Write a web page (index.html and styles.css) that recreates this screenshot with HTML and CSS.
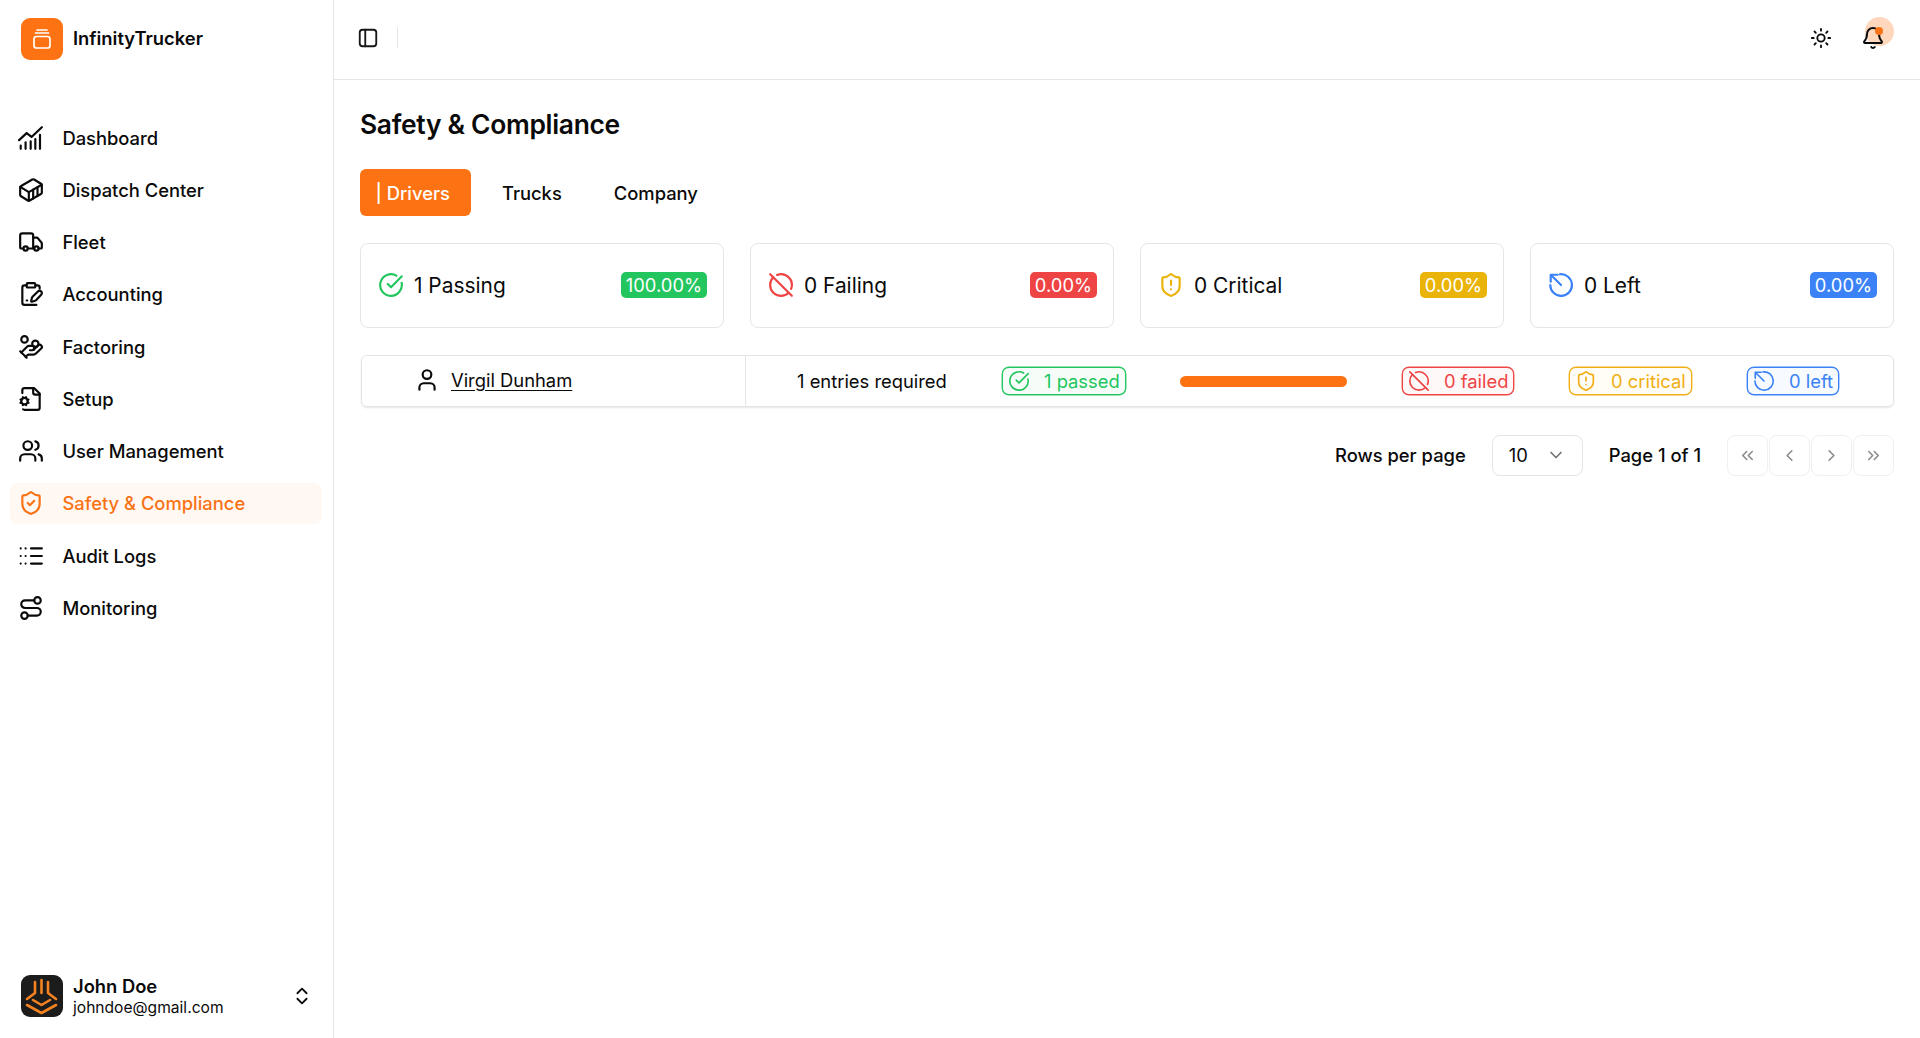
FILE: index.html
```html
<!DOCTYPE html>
<html lang="en">
<head>
<meta charset="utf-8">
<title>Safety &amp; Compliance</title>
<link rel="stylesheet" href="styles.css">
</head>
<body>
<svg class="sprite" width="0" height="0" aria-hidden="true">
  <symbol id="i-check" viewBox="0 0 24 24"><path d="M21.801 10A10 10 0 1 1 17 3.335"/><path d="m9 11 3 3L22 4"/></symbol>
  <symbol id="i-off" viewBox="0 0 24 24"><path d="m2 2 20 20"/><path d="M8.35 2.69A10 10 0 0 1 21.3 15.65"/><path d="M19.08 19.08A10 10 0 1 1 4.92 4.92"/></symbol>
  <symbol id="i-alert" viewBox="0 0 24 24"><path d="M20 13c0 5-3.5 7.5-7.66 8.95a1 1 0 0 1-.67-.01C7.5 20.5 4 18 4 13V6a1 1 0 0 1 1-1c2 0 4.5-1.2 6.24-2.72a1.17 1.17 0 0 1 1.52 0C14.51 3.81 17 5 19 5a1 1 0 0 1 1 1z"/><path d="M12 8v4"/><path d="M12 16h.01"/></symbol>
  <symbol id="i-left" viewBox="0 0 24 24"><path d="M11 2.1A10 10 0 1 1 2.1 12"/><path d="M12 12 3 3"/><path d="M2.5 9V2.5H9"/></symbol>
</svg>
<div class="app">
  <aside class="sidebar">
    <div class="brand">
      <svg class="brand-logo" viewBox="0 0 42 42"><rect width="42" height="42" rx="9" fill="#fd7313"/><g fill="none" stroke="#fff" stroke-width="1.7" stroke-linecap="round"><rect x="13" y="18.5" width="16" height="11.5" rx="2.5"/><path d="M14.5 15h13M16 12h10"/></g></svg>
      <span class="brand-name">InfinityTrucker</span>
    </div>
    <nav class="nav">
      <a class="nav-item"><svg class="ico" viewBox="0 0 24 24"><path d="M1 14 8 7.5l4.5 3.5L22 2"/><path d="M2.5 22v-3M7 22v-6M11.7 22v-7M16 22v-9M20.3 22V9"/></svg>Dashboard</a>
      <a class="nav-item"><svg class="ico" viewBox="0 0 24 24"><path d="M22 7.7c0-.6-.4-1.2-.8-1.5l-6.3-3.9a1.72 1.72 0 0 0-1.7 0l-10.3 6c-.5.2-.9.8-.9 1.4v6.6c0 .5.4 1.2.8 1.5l6.3 3.9a1.72 1.72 0 0 0 1.7 0l10.3-6c.5-.3.9-1 .9-1.5Z"/><path d="M10 21.9V14L2.1 9.1"/><path d="m10 14 11.9-6.9"/><path d="M14 19.8v-8.1"/><path d="M18 17.5V9.4"/></svg>Dispatch Center</a>
      <a class="nav-item"><svg class="ico" viewBox="0 0 24 24"><path d="M14 18V6a2 2 0 0 0-2-2H4a2 2 0 0 0-2 2v11a1 1 0 0 0 1 1h2"/><path d="M15 18H9"/><path d="M19 18h2a1 1 0 0 0 1-1v-3.65a1 1 0 0 0-.22-.624l-3.48-4.35A1 1 0 0 0 17.52 8H14"/><circle cx="17" cy="18" r="2"/><circle cx="7" cy="18" r="2"/></svg>Fleet</a>
      <a class="nav-item"><svg class="ico" viewBox="0 0 24 24"><rect x="8" y="2" width="8" height="4" rx="1"/><path d="M8 4H6a2 2 0 0 0-2 2v14a2 2 0 0 0 2 2h11"/><path d="M16 4h2a2 2 0 0 1 2 2v1"/><path d="M8 18h.5"/><path d="M21.4 12.6a2 2 0 0 0-3-3l-5 5a2 2 0 0 0-.5.9l-.8 3a.5.5 0 0 0 .6.6l3-.8a2 2 0 0 0 .9-.5z"/></svg>Accounting</a>
      <a class="nav-item"><svg class="ico" viewBox="0 0 24 24"><path d="M11 15h2a2 2 0 1 0 0-4h-3c-.6 0-1.1.2-1.4.6L3 17"/><path d="m7 21 1.6-1.4c.3-.4.8-.6 1.4-.6h4c1.1 0 2.1-.4 2.8-1.2l4.6-4.4a2 2 0 0 0-2.75-2.91l-4.2 3.9"/><path d="m2 16 6 6"/><circle cx="16" cy="9" r="2.9"/><circle cx="6" cy="5" r="3"/></svg>Factoring</a>
      <a class="nav-item"><svg class="ico" viewBox="0 0 24 24"><path d="m2.305 15.53.923-.382"/><path d="m3.228 12.852-.924-.383"/><path d="M4.677 21.5a2 2 0 0 0 1.313.5H18a2 2 0 0 0 2-2V7l-5-5H6a2 2 0 0 0-2 2v2.5"/><path d="M14 2v4a2 2 0 0 0 2 2h4"/><path d="m4.852 11.228-.383-.923"/><path d="m4.852 16.772-.383.924"/><path d="m7.148 11.228.383-.923"/><path d="m7.53 17.696-.382-.924"/><path d="m8.772 12.852.923-.383"/><path d="m8.772 15.148.923.383"/><circle cx="6" cy="14" r="3"/></svg>Setup</a>
      <a class="nav-item"><svg class="ico" viewBox="0 0 24 24"><path d="M16 21v-2a4 4 0 0 0-4-4H6a4 4 0 0 0-4 4v2"/><circle cx="9" cy="7" r="4"/><path d="M22 21v-2a4 4 0 0 0-3-3.87"/><path d="M16 3.13a4 4 0 0 1 0 7.75"/></svg>User Management</a>
      <a class="nav-item nav-item-active"><svg class="ico" viewBox="0 0 24 24"><path d="M20 13c0 5-3.5 7.5-7.66 8.95a1 1 0 0 1-.67-.01C7.5 20.5 4 18 4 13V6a1 1 0 0 1 1-1c2 0 4.5-1.2 6.24-2.72a1.17 1.17 0 0 1 1.52 0C14.51 3.81 17 5 19 5a1 1 0 0 1 1 1z"/><path d="m9 12 2 2 4-4"/></svg>Safety &amp; Compliance</a>
      <a class="nav-item"><svg class="ico" viewBox="0 0 24 24"><path d="M2.5 5h.01M7 5h.01M2.5 12h.01M7 12h.01M2.5 19h.01M7 19h.01M12 5h10M12 12h10M12 19h10"/></svg>Audit Logs</a>
      <a class="nav-item"><svg class="ico" viewBox="0 0 24 24"><circle cx="6" cy="19" r="3"/><path d="M9 19h8.5a3.5 3.5 0 0 0 0-7h-11a3.5 3.5 0 0 1 0-7H15"/><circle cx="18" cy="5" r="3"/></svg>Monitoring</a>
    </nav>
    <div class="user">
      <svg class="user-logo" viewBox="0 0 42 42"><rect width="42" height="42" rx="9" fill="#1c1c1c"/><g fill="none" stroke="#f58220" stroke-width="2.6"><path d="M20.5 5v13"/><path d="M14 7v11l-8 6"/><path d="M27 7v11l8 6"/><path d="m12 25 8.500 5 8.500-5"/><path d="m6 30 14.500 8 14.500-8"/></g></svg>
      <div class="user-text">
        <div class="user-name">John Doe</div>
        <div class="user-mail">johndoe@gmail.com</div>
      </div>
      <svg class="user-caret" viewBox="0 0 24 24"><path d="m7 15 5 5 5-5"/><path d="m7 9 5-5 5 5"/></svg>
    </div>
  </aside>
  <div class="main">
    <header class="topbar">
      <svg class="panel-ico" viewBox="0 0 24 24"><rect x="3" y="3" width="18" height="18" rx="3"/><path d="M9 3v18"/></svg>
      <span class="topbar-sep"></span>
      <div class="topbar-right">
        <svg class="sun-ico" viewBox="0 0 24 24"><circle cx="12" cy="12" r="4"/><path d="M12 2v2M12 20v2M4.93 4.93l1.41 1.41M17.66 17.66l1.41 1.41M2 12h2M20 12h2M6.34 17.66l-1.41 1.41M19.07 4.93l-1.41 1.41"/></svg>
        <div class="bell">
          <span class="bell-halo"></span>
          <svg class="bell-ico" viewBox="0 0 24 24"><path d="M10.268 21a2 2 0 0 0 3.464 0"/><path d="M3.262 15.326A1 1 0 0 0 4 17h16a1 1 0 0 0 .74-1.673C19.41 13.956 18 12.499 18 8A6 6 0 0 0 6 8c0 4.499-1.411 5.956-2.738 7.326"/></svg>
          <span class="bell-dot"></span>
        </div>
      </div>
    </header>
    <main class="content">
      <h1 class="title">Safety &amp; Compliance</h1>
      <div class="tabs">
        <button class="tab tab-active">| Drivers</button>
        <button class="tab">Trucks</button>
        <button class="tab">Company</button>
      </div>
      <section class="stats">
        <div class="stat"><svg class="stat-ico c-green"><use href="#i-check"/></svg><span class="stat-label">1 Passing</span><span class="badge bg-green">100.00%</span></div>
        <div class="stat"><svg class="stat-ico c-red"><use href="#i-off"/></svg><span class="stat-label">0 Failing</span><span class="badge bg-red">0.00%</span></div>
        <div class="stat"><svg class="stat-ico c-yellow"><use href="#i-alert"/></svg><span class="stat-label">0 Critical</span><span class="badge bg-yellow">0.00%</span></div>
        <div class="stat"><svg class="stat-ico c-blue"><use href="#i-left"/></svg><span class="stat-label">0 Left</span><span class="badge bg-blue">0.00%</span></div>
      </section>
      <section class="row">
        <div class="row-name">
          <svg class="person" viewBox="0 0 24 24"><path d="M19 21v-2a4 4 0 0 0-4-4H9a4 4 0 0 0-4 4v2"/><circle cx="12" cy="7" r="4"/></svg>
          <a class="driver">Virgil Dunham</a>
        </div>
        <div class="row-cells">
          <span class="entries">1 entries required</span>
          <span class="pill c-green pill-green"><svg class="pill-ico"><use href="#i-check"/></svg>1 passed</span>
          <span class="progress"></span>
          <span class="pill c-red pill-red"><svg class="pill-ico"><use href="#i-off"/></svg>0 failed</span>
          <span class="pill c-amber pill-amber"><svg class="pill-ico"><use href="#i-alert"/></svg>0 critical</span>
          <span class="pill c-blue pill-blue"><svg class="pill-ico"><use href="#i-left"/></svg>0 left</span>
        </div>
      </section>
      <section class="pager">
        <span class="pager-text">Rows per page</span>
        <div class="select"><span>10</span><svg class="select-caret" viewBox="0 0 24 24"><path d="m6 9 6 6 6-6"/></svg></div>
        <span class="pager-text">Page 1 of 1</span>
        <div class="pager-btns">
          <button class="page-btn"><svg viewBox="0 0 24 24"><path d="m11 17-5-5 5-5"/><path d="m18 17-5-5 5-5"/></svg></button>
          <button class="page-btn"><svg viewBox="0 0 24 24"><path d="m15 18-6-6 6-6"/></svg></button>
          <button class="page-btn"><svg viewBox="0 0 24 24"><path d="m9 18 6-6-6-6"/></svg></button>
          <button class="page-btn"><svg viewBox="0 0 24 24"><path d="m6 17 5-5-5-5"/><path d="m13 17 5-5-5-5"/></svg></button>
        </div>
      </section>
    </main>
  </div>
</div>
</body>
</html>
```
FILE: styles.css
```css
* { box-sizing: border-box; }
html, body { margin: 0; height: 100%; }
body {
  font-family: Inter, "Liberation Sans", sans-serif;
  color: #0a0a0a;
  background: #fff;
  overflow: hidden;
}
.sprite { position: absolute; }
svg { fill: none; stroke: currentColor; stroke-width: 2; stroke-linecap: round; stroke-linejoin: round; flex: none; }
.app { display: flex; height: 100vh; }

.sidebar {
  width: 334px;
  flex: none;
  border-right: 1px solid #e5e5e5;
  display: flex;
  flex-direction: column;
}
.brand { display: flex; align-items: center; gap: 10px; padding: 18px 21px 0; height: 60px; }
.brand-logo { width: 42px; height: 42px; stroke: none; }
.brand-name { font-size: 18.36px; font-weight: 600; padding-bottom: 2px; }
.nav { display: flex; flex-direction: column; gap: 11.25px; padding: 0 10px; margin-top: 57px; flex: 1; }
.nav-item {
  display: flex;
  align-items: center;
  gap: 18.4px;
  height: 41px;
  padding-left: 8px;
  width: 312px;
  font-size: 18.36px;
  font-weight: 500;
  border-radius: 8px;
}
.nav-item-active { background: #fff8f3; color: #f97316; }
.ico { width: 26px; height: 26px; }
.user { display: flex; align-items: center; gap: 10px; padding: 0 21px 20px; }
.user-logo { width: 42px; height: 42px; stroke: none; }
.user-text { flex: 1; padding-top: 2px; }
.user-name { font-size: 18.36px; font-weight: 600; line-height: 22px; }
.user-mail { font-size: 15.6px; line-height: 21px; }
.user-caret { width: 22px; height: 22px; margin: 1px -1px 0 0; }

.main { flex: 1; min-width: 0; display: flex; flex-direction: column; }
.topbar {
  height: 80px;
  flex: none;
  border-bottom: 1px solid #e5e5e5;
  display: flex;
  align-items: center;
  padding: 0 35px 4px 23px;
}
.panel-ico { width: 22px; height: 22px; color: #171717; }
.topbar-sep { width: 1px; height: 21px; background: #e5e5e5; margin-left: 18px; }
.topbar-right { margin-left: auto; display: flex; align-items: center; gap: 29px; }
.sun-ico { width: 22px; height: 22px; }
.bell { position: relative; width: 24px; height: 24px; }
.bell-ico { position: relative; width: 24px; height: 24px; display: block; }
.bell-halo { position: absolute; left: 4px; top: -9px; width: 29px; height: 29px; border-radius: 50%; background: #fed7bd; }
.bell-dot { position: absolute; left: 14px; top: 1px; width: 8px; height: 8px; border-radius: 50%; background: #f97316; }

.content { padding: 29px 26px 0; flex: 1; }
.title { margin: 0; font-size: 26.4px; line-height: 31px; font-weight: 600; letter-spacing: -0.3px; padding-bottom: 1px; }
.tabs { display: flex; gap: 10px; margin-top: 28px; }
.tab {
  height: 47px;
  padding: 0 21px;
  border: 0;
  border-radius: 6px;
  background: none;
  font: 500 18.36px Inter, sans-serif;
  color: #0a0a0a;
}
.tab-active { background: #fd7313; color: #fff; padding-left: 15.5px; }

.stats { display: grid; grid-template-columns: repeat(4, 1fr); gap: 26px; margin-top: 27px; }
.stat {
  height: 85px;
  display: flex;
  align-items: center;
  padding: 0 16px 1px 17px;
  border: 1px solid #e5e5e5;
  border-radius: 8px;
}
.stat-ico { width: 26px; height: 26px; }
.stat-label { font-size: 20.9px; margin-left: 10px; flex: 1; }
.badge { color: #fff; font-size: 18.36px; line-height: 26px; padding: 0 5px; border-radius: 5px; }
.c-green { color: #22c55e; }
.c-red { color: #ef4444; }
.c-yellow { color: #eab308; }
.c-amber { color: #f0ae14; }
.c-blue { color: #3b82f6; }
.bg-green { background: #22c55e; }
.bg-red { background: #ef4444; }
.bg-yellow { background: #eab308; }
.bg-blue { background: #3b82f6; }

.row {
  display: flex;
  height: 52px;
  margin: 27px 0 0 1px;
  border: 1px solid #e5e5e5;
  border-radius: 6px;
  box-shadow: 0 1px 2px rgba(0, 0, 0, .1);
}
.row-name {
  width: 384px;
  flex: none;
  display: flex;
  align-items: center;
  gap: 11px;
  padding: 0 0 3px 52px;
  border-right: 1px solid #e5e5e5;
  font-size: 18.36px;
}
.person { width: 26px; height: 26px; }
.driver { text-decoration: underline; text-underline-offset: 3px; }
.row-cells {
  flex: 1;
  display: grid;
  grid-template-columns: 256px 178px 222px 167px 178px auto;
  align-items: center;
  justify-items: start;
  font-size: 18.36px;
}
.entries { padding-left: 51px; }
.pill {
  display: inline-flex;
  align-items: center;
  height: 28px;
  padding: 0 5px;
  border: 1px solid currentColor;
  border-radius: 7px;
  box-shadow: 0 0 0 .4px currentColor;
}
.pill-green { background: #f6fdf9; }
.pill-red { background: #fef8f8; }
.pill-amber { background: #fffdf6; }
.pill-blue { background: #f7faff; }
.pill-ico { width: 22px; height: 22px; margin-right: 14px; stroke-width: 1.8; }
.progress { width: 167px; height: 11px; border-radius: 6px; background: #fd7313; }

.pager { display: flex; justify-content: flex-end; align-items: center; gap: 26px; margin-top: 28px; font-size: 18.36px; font-weight: 500; }
.pager-text { margin-bottom: 2px; }
.select {
  width: 91px;
  height: 41px;
  display: flex;
  align-items: center;
  justify-content: space-between;
  padding: 0 16px 2px;
  border: 1px solid #e5e5e5;
  border-radius: 8px;
  font-weight: 400;
}
.select-caret { width: 20px; height: 20px; color: #737373; }
.pager-btns { display: flex; gap: 1px; }
.page-btn {
  width: 41px;
  height: 41px;
  padding: 0;
  display: flex;
  align-items: center;
  justify-content: center;
  background: #fff;
  border: 1px solid #f0f0f0;
  border-radius: 8px;
  color: #8a8a8a;
}
.page-btn svg { width: 19px; height: 19px; }
```
